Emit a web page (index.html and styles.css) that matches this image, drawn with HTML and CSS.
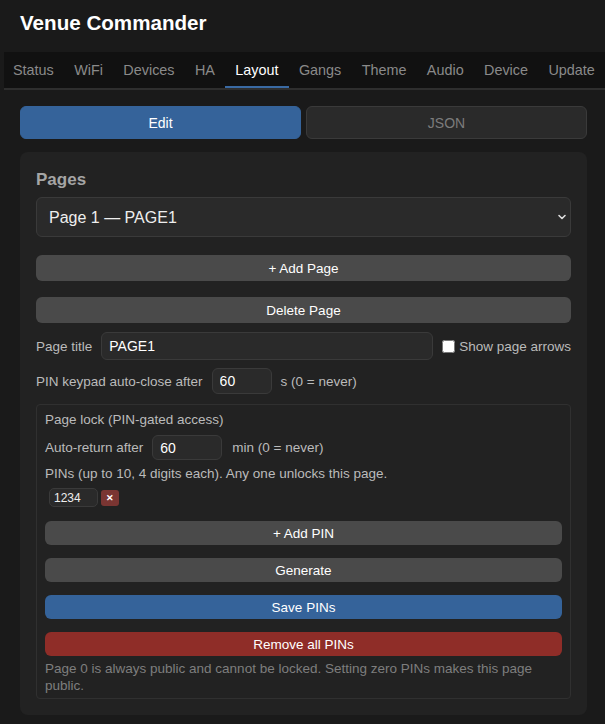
FILE: index.html
```html
<!DOCTYPE html>
<html>
<head>
	<meta charset="utf-8">
	<title>Venue Commander</title>
	<link rel="stylesheet" href="styles.css">
</head>
<body>
	<header class="top">
		<h1>Venue Commander</h1>
	</header>

	<nav class="tabs">
		<a>Status</a>
		<a>WiFi</a>
		<a>Devices</a>
		<a>HA</a>
		<a class="active">Layout</a>
		<a>Gangs</a>
		<a>Theme</a>
		<a>Audio</a>
		<a>Device</a>
		<a>Update</a>
	</nav>

	<main class="content">
		<div class="modeSwitch">
			<button class="mode on">Edit</button>
			<button class="mode">JSON</button>
		</div>

		<section class="card">
			<h2>Pages</h2>

			<div class="selectWrap">
				<select class="pageSelect">
					<option>Page 1 — PAGE1</option>
				</select>
				<svg class="chevron" width="10" height="10" viewBox="0 0 10 10">
					<path d="M2 3.5 L5 6.5 L8 3.5" fill="none" stroke="#ddd" stroke-width="1.6" stroke-linecap="round" stroke-linejoin="round"/>
				</svg>
			</div>

			<button class="btn wide addPage">+ Add Page</button>
			<button class="btn wide delPage">Delete Page</button>

			<div class="row titleRow">
				<label>Page title</label>
				<input class="field grow" type="text" value="PAGE1">
				<label class="check"><input type="checkbox"> Show page arrows</label>
			</div>

			<div class="row keypadRow">
				<label>PIN keypad auto-close after</label>
				<input class="field short" type="text" value="60">
				<span>s (0 = never)</span>
			</div>

			<div class="lockBox">
				<div class="lockTitle">Page lock (PIN-gated access)</div>

				<div class="row returnRow">
					<label>Auto-return after</label>
					<input class="field mid" type="text" value="60">
					<span>min (0 = never)</span>
				</div>

				<div class="pinNote">PINs (up to 10, 4 digits each). Any one unlocks this page.</div>

				<div class="pins">
					<input class="pin" type="text" value="1234">
					<button class="pinDel">&#10005;</button>
				</div>

				<button class="btn small">+ Add PIN</button>
				<button class="btn small">Generate</button>
				<button class="btn small blue">Save PINs</button>
				<button class="btn small red">Remove all PINs</button>

				<p class="hint">Page 0 is always public and cannot be locked. Setting zero PINs makes this page public.</p>
			</div>
		</section>
	</main>
</body>
</html>
```

FILE: styles.css
```css
* {
	box-sizing: border-box;
}

body {
	margin: 0;
	background: #1a1a1a;
	color: #bbb;
	font-family: "Liberation Sans", Arial, sans-serif;
	font-size: 13.5px;
	height: 724px;
	overflow: hidden;
}

.top {
	padding: 11px 20px 0;
	height: 52px;
}

.top h1 {
	margin: 0;
	font-size: 20.6px;
	line-height: 24px;
	color: #fff;
	font-weight: bold;
}

.tabs {
	display: flex;
	margin-left: 4px;
	background: #111;
	border-bottom: 2px solid #2e2e2e;
	height: 38px;
	white-space: nowrap;
	overflow: hidden;
}

.tabs a {
	display: block;
	padding: 0 10.2px;
	line-height: 36px;
	font-size: 14.4px;
	color: #8a8a8a;
}

.tabs a:first-child {
	padding-left: 9px;
}

.tabs a.active {
	color: #fff;
	border-bottom: 2px solid #3a6aa3;
}

.content {
	padding: 16px 18px 0 20px;
}

/* edit / json toggle */
.modeSwitch {
	display: grid;
	grid-template-columns: 1fr 1fr;
	gap: 5px;
}

button {
	font-family: inherit;
	cursor: pointer;
}

.mode {
	height: 33px;
	border-radius: 6px;
	border: 1px solid #3a3a3a;
	background: #2a2a2a;
	color: #7c7c7c;
	font-size: 14px;
}

.mode.on {
	background: #35639a;
	border-color: #35639a;
	color: #fff;
}

.card {
	margin-top: 13px;
	background: #222;
	border-radius: 8px;
	padding: 18px 16px 16px;
}

.card h2 {
	margin: 0 0 7px;
	font-size: 17px;
	line-height: 20px;
	color: #a5a5a5;
}

.selectWrap {
	position: relative;
}

.pageSelect {
	appearance: none;
	-webkit-appearance: none;
	width: 100%;
	height: 40px;
	background: #2a2a2a;
	border: 1px solid #3a3a3a;
	border-radius: 6px;
	color: #eee;
	font-family: inherit;
	font-size: 16px;
	padding: 0 12px;
}

.chevron {
	position: absolute;
	right: 4px;
	top: 15px;
}

.btn {
	display: block;
	width: 100%;
	border: none;
	border-radius: 6px;
	background: #4a4a4a;
	color: #fff;
	font-size: 13.5px;
	padding: 0;
}

.btn.wide {
	height: 26px;
}

.addPage {
	margin-top: 18px;
}

.delPage {
	margin-top: 16px;
}

.row {
	display: flex;
	align-items: center;
	gap: 9px;
}

.titleRow {
	margin-top: 9px;
}

.keypadRow {
	margin-top: 8px;
}

.field {
	height: 28px;
	background: #2a2a2a;
	border: 1px solid #3a3a3a;
	border-radius: 6px;
	color: #fff;
	font-family: inherit;
	font-size: 14px;
	padding: 0 7px;
}

.grow {
	flex: 1;
}

.short {
	width: 60px;
	height: 26px;
}

.mid {
	width: 70px;
	height: 25px;
	margin-right: 1px;
}

.check {
	display: flex;
	align-items: center;
}

.check input {
	margin: 0 4px 0 0;
	width: 13px;
	height: 13px;
}

/* pin lock section */
.lockBox {
	margin-top: 10px;
	border: 1px solid #303030;
	border-radius: 4px;
	padding: 7px 8px 4px;
}

.lockTitle {
	line-height: 16px;
}

.returnRow {
	margin-top: 7px;
}

.pinNote {
	margin-top: 6px;
	line-height: 16px;
}

.pins {
	display: flex;
	align-items: center;
	gap: 3px;
	margin: 6px 0 0 4px;
}

.pin {
	width: 49px;
	height: 19px;
	background: #2a2a2a;
	border: 1px solid #3a3a3a;
	border-radius: 5px;
	color: #eee;
	font-family: inherit;
	font-size: 12px;
	padding: 0 4px;
}

.pinDel {
	width: 18px;
	height: 16px;
	border: none;
	border-radius: 3px;
	background: #7a3532;
	color: #fff;
	font-size: 9px;
	font-weight: bold;
	padding: 0;
}

.btn.small {
	height: 24px;
	margin-top: 13px;
}

.pins + .btn.small {
	margin-top: 14px;
}

.btn.blue {
	background: #35639a;
}

.btn.red {
	background: #8f2d28;
}

.hint {
	margin: 4px 0 0;
	line-height: 17px;
	color: #7e7e7e;
}
```
